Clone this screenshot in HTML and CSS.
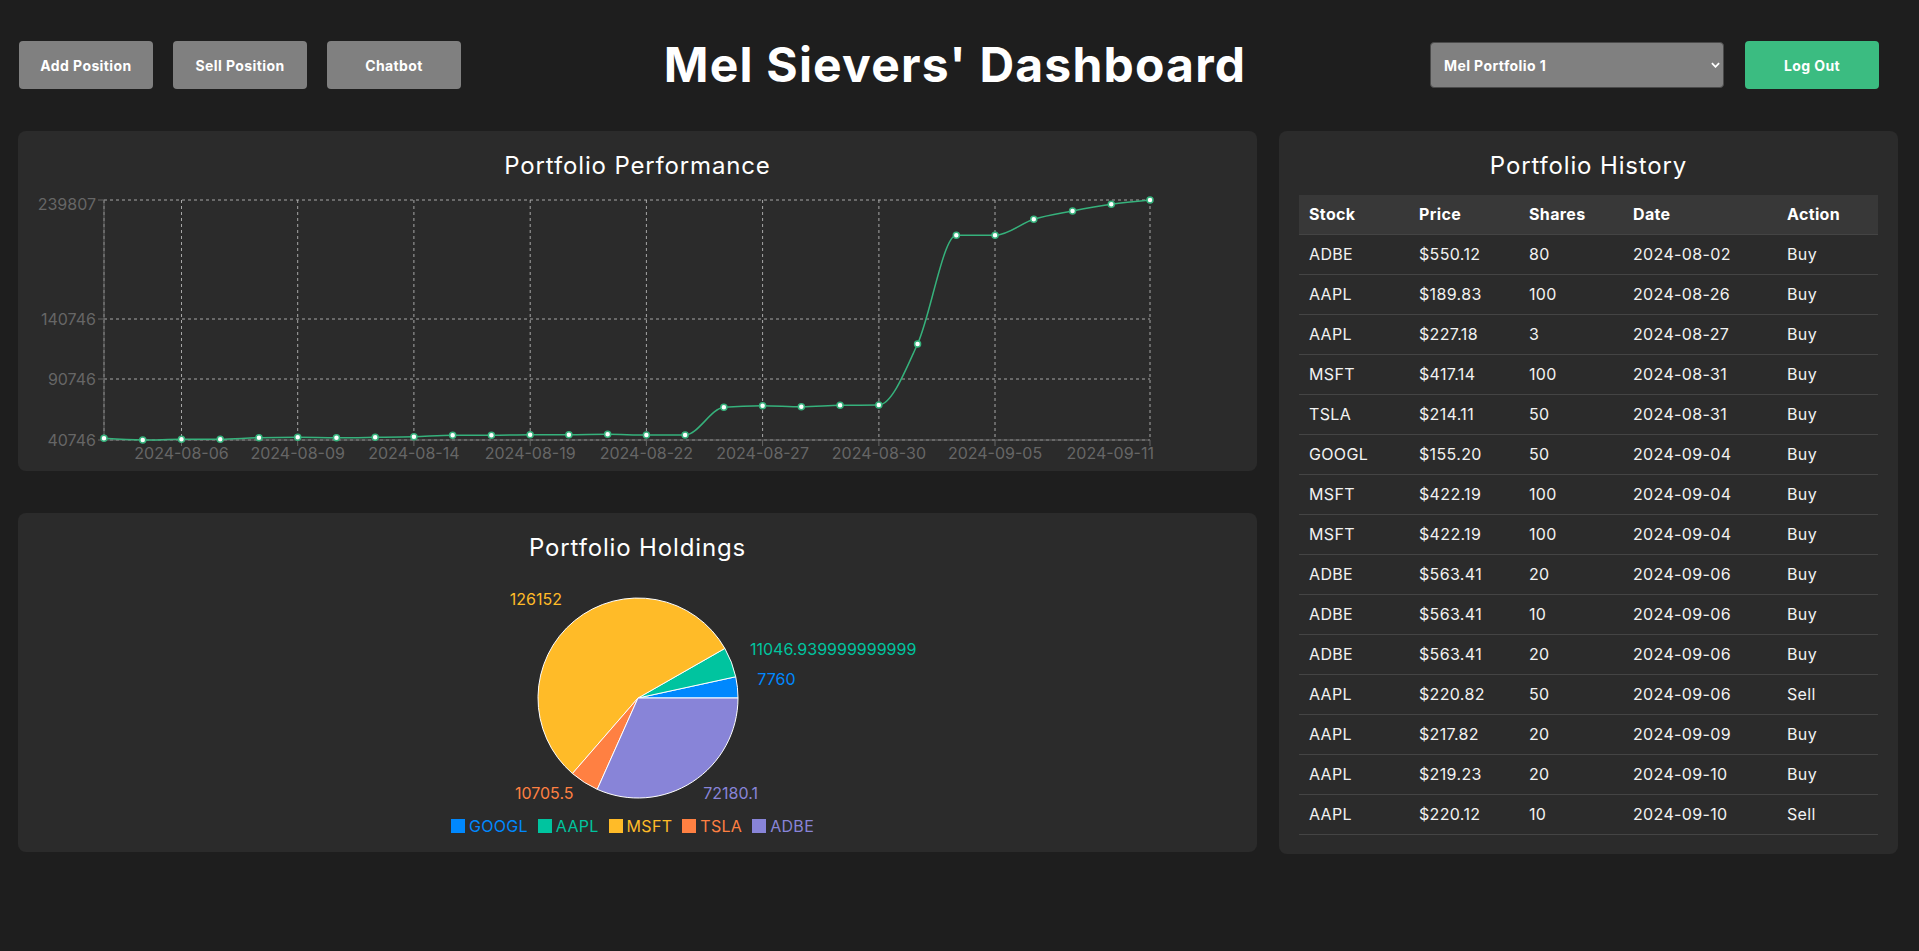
FILE: index.html
```html
<!DOCTYPE html>
<html lang="en">
<head>
<meta charset="utf-8">
<title>Mel Sievers' Dashboard</title>
<link rel="stylesheet" href="styles.css">
</head>
<body>
<header class="topbar">
  <div class="actions">
    <button class="btn btn-gray">Add Position</button>
    <button class="btn btn-gray">Sell Position</button>
    <button class="btn btn-gray">Chatbot</button>
  </div>
  <h1 class="page-title">Mel Sievers' Dashboard</h1>
  <div class="account">
    <div class="select-wrap">
      <select class="portfolio-select">
        <option>Mel Portfolio 1</option>
      </select>
      <svg class="chevron" viewBox="0 0 10 6" aria-hidden="true"><path d="M1 1 L5 5 L9 1" fill="none" stroke="#fff" stroke-width="2"/></svg>
    </div>
    <button class="btn btn-green">Log Out</button>
  </div>
</header>

<main class="dashboard">
  <div class="left-col">
    <section class="card perf-card">
      <h2 class="card-title">Portfolio Performance</h2>
      <svg class="line-chart" width="1199" height="280" viewBox="0 0 1199 280">
        <g class="grid">
          <line x1="66" y1="14" x2="1112" y2="14"/>
          <line x1="66" y1="133" x2="1112" y2="133"/>
          <line x1="66" y1="193" x2="1112" y2="193"/>
          <line x1="66" y1="254" x2="1112" y2="254"/>
          <line x1="66" y1="14" x2="66" y2="254"/>
          <line x1="143.5" y1="14" x2="143.5" y2="254"/>
          <line x1="259.7" y1="14" x2="259.7" y2="254"/>
          <line x1="375.9" y1="14" x2="375.9" y2="254"/>
          <line x1="492.2" y1="14" x2="492.2" y2="254"/>
          <line x1="608.4" y1="14" x2="608.4" y2="254"/>
          <line x1="724.6" y1="14" x2="724.6" y2="254"/>
          <line x1="840.9" y1="14" x2="840.9" y2="254"/>
          <line x1="957" y1="14" x2="957" y2="254"/>
          <line x1="1112" y1="14" x2="1112" y2="254"/>
        </g>
        <g class="axis">
          <line x1="66" y1="14" x2="66" y2="254"/>
          <line x1="66" y1="254" x2="1112" y2="254"/>
          <line x1="60" y1="14" x2="66" y2="14"/>
          <line x1="60" y1="133" x2="66" y2="133"/>
          <line x1="60" y1="193" x2="66" y2="193"/>
          <line x1="60" y1="254" x2="66" y2="254"/>
          <line x1="143.5" y1="254" x2="143.5" y2="260"/>
          <line x1="259.7" y1="254" x2="259.7" y2="260"/>
          <line x1="375.9" y1="254" x2="375.9" y2="260"/>
          <line x1="492.2" y1="254" x2="492.2" y2="260"/>
          <line x1="608.4" y1="254" x2="608.4" y2="260"/>
          <line x1="724.6" y1="254" x2="724.6" y2="260"/>
          <line x1="840.9" y1="254" x2="840.9" y2="260"/>
          <line x1="957" y1="254" x2="957" y2="260"/>
          <line x1="1112" y1="254" x2="1112" y2="260"/>
        </g>
        <g class="y-labels">
          <text x="58" y="24">239807</text>
          <text x="58" y="138.7">140746</text>
          <text x="58" y="198.7">90746</text>
          <text x="58" y="259.7">40746</text>
        </g>
        <g class="x-labels">
          <text x="143.5" y="273">2024-08-06</text>
          <text x="259.7" y="273">2024-08-09</text>
          <text x="375.9" y="273">2024-08-14</text>
          <text x="492.2" y="273">2024-08-19</text>
          <text x="608.4" y="273">2024-08-22</text>
          <text x="724.6" y="273">2024-08-27</text>
          <text x="840.9" y="273">2024-08-30</text>
          <text x="957" y="273">2024-09-05</text>
          <text class="x-last" x="1116" y="273">2024-09-11</text>
        </g>
        <path id="perf-line" class="perf-line" d=""/>
        <g id="perf-dots" class="perf-dots"></g>
      </svg>
    </section>

    <section class="card holdings-card">
      <h2 class="card-title">Portfolio Holdings</h2>
      <svg class="pie-chart" width="400" height="240" viewBox="0 0 400 240">
        <g class="slices">
          <path class="s-googl" d="M200,125 L300,125 A100,100 0 0 0 297.72,103.76 Z"/>
          <path class="s-aapl" d="M200,125 L297.72,103.76 A100,100 0 0 0 286.85,75.43 Z"/>
          <path class="s-msft" d="M200,125 L286.85,75.43 A100,100 0 1 0 134.45,200.52 Z"/>
          <path class="s-tsla" d="M200,125 L134.45,200.52 A100,100 0 0 0 159.26,216.33 Z"/>
          <path class="s-adbe" d="M200,125 L159.26,216.33 A100,100 0 0 0 300,125 Z"/>
        </g>
        <g class="pie-labels">
          <text class="t-googl" x="319.3" y="112.2">7760</text>
          <text class="t-aapl" x="312" y="82">11046.939999999999</text>
          <text class="t-msft end" x="123.9" y="32.3">126152</text>
          <text class="t-tsla end" x="135.5" y="226.2">10705.5</text>
          <text class="t-adbe" x="265.3" y="225.7">72180.1</text>
        </g>
      </svg>
      <ul class="legend">
        <li class="legend-item c-googl"><span class="swatch"></span>GOOGL</li>
        <li class="legend-item c-aapl"><span class="swatch"></span>AAPL</li>
        <li class="legend-item c-msft"><span class="swatch"></span>MSFT</li>
        <li class="legend-item c-tsla"><span class="swatch"></span>TSLA</li>
        <li class="legend-item c-adbe"><span class="swatch"></span>ADBE</li>
      </ul>
    </section>
  </div>

  <section class="card history-card">
    <h2 class="card-title history-title">Portfolio History</h2>
    <table class="history-table">
      <colgroup>
        <col class="col-stock"><col class="col-price"><col class="col-shares"><col class="col-date"><col class="col-action">
      </colgroup>
      <thead>
        <tr><th>Stock</th><th>Price</th><th>Shares</th><th>Date</th><th>Action</th></tr>
      </thead>
      <tbody>
        <tr><td>ADBE</td><td>$550.12</td><td>80</td><td>2024-08-02</td><td>Buy</td></tr>
        <tr><td>AAPL</td><td>$189.83</td><td>100</td><td>2024-08-26</td><td>Buy</td></tr>
        <tr><td>AAPL</td><td>$227.18</td><td>3</td><td>2024-08-27</td><td>Buy</td></tr>
        <tr><td>MSFT</td><td>$417.14</td><td>100</td><td>2024-08-31</td><td>Buy</td></tr>
        <tr><td>TSLA</td><td>$214.11</td><td>50</td><td>2024-08-31</td><td>Buy</td></tr>
        <tr><td>GOOGL</td><td>$155.20</td><td>50</td><td>2024-09-04</td><td>Buy</td></tr>
        <tr><td>MSFT</td><td>$422.19</td><td>100</td><td>2024-09-04</td><td>Buy</td></tr>
        <tr><td>MSFT</td><td>$422.19</td><td>100</td><td>2024-09-04</td><td>Buy</td></tr>
        <tr><td>ADBE</td><td>$563.41</td><td>20</td><td>2024-09-06</td><td>Buy</td></tr>
        <tr><td>ADBE</td><td>$563.41</td><td>10</td><td>2024-09-06</td><td>Buy</td></tr>
        <tr><td>ADBE</td><td>$563.41</td><td>20</td><td>2024-09-06</td><td>Buy</td></tr>
        <tr><td>AAPL</td><td>$220.82</td><td>50</td><td>2024-09-06</td><td>Sell</td></tr>
        <tr><td>AAPL</td><td>$217.82</td><td>20</td><td>2024-09-09</td><td>Buy</td></tr>
        <tr><td>AAPL</td><td>$219.23</td><td>20</td><td>2024-09-10</td><td>Buy</td></tr>
        <tr><td>AAPL</td><td>$220.12</td><td>10</td><td>2024-09-10</td><td>Sell</td></tr>
      </tbody>
    </table>
  </section>
</main>
<script src="script.js"></script>
</body>
</html>
```

FILE: styles.css
```css
* { box-sizing: border-box; }

html, body { margin: 0; padding: 0; }

body {
  background: #1e1e1e;
  color: #ffffff;
  font-family: Inter, "Noto Sans", "DejaVu Sans", sans-serif;
  min-height: 951px;
}

/* ---------- header ---------- */
.topbar {
  display: grid;
  grid-template-columns: 1fr auto 1fr;
  align-items: center;
  padding: 41px 28px 0 19px;
}

.actions {
  display: flex;
  gap: 20px;
}

.btn {
  height: 48px;
  border: none;
  border-radius: 4px;
  color: #ffffff;
  font-family: inherit;
  font-size: 14px;
  font-weight: 700;
  letter-spacing: 0.4px;
  padding: 0;
  cursor: pointer;
}

.btn-gray {
  width: 134px;
  background: #808080;
}

.btn-green {
  width: 134px;
  background: #3bbc81;
}

.page-title {
  margin: 0;
  font-size: 48px;
  font-weight: 700;
  line-height: 48px;
  letter-spacing: 1.2px;
  text-align: center;
  white-space: nowrap;
}

.account {
  justify-self: end;
  display: flex;
  align-items: center;
  gap: 21px;
  margin-right: 12px;
}

.select-wrap {
  position: relative;
}

.portfolio-select {
  appearance: none;
  -webkit-appearance: none;
  display: block;
  width: 294px;
  height: 46px;
  padding: 0 24px 0 13px;
  background: #808080;
  border: 1px solid #4a4a4a;
  border-radius: 4px;
  color: #ffffff;
  font-family: inherit;
  font-size: 14px;
  font-weight: 700;
  letter-spacing: 0.4px;
}

.chevron {
  position: absolute;
  right: 4px;
  top: 20px;
  width: 9px;
  height: 6px;
  pointer-events: none;
}

/* ---------- layout ---------- */
.dashboard {
  display: grid;
  grid-template-columns: 2fr 1fr;
  gap: 22px;
  align-items: start;
  padding: 42px 21px 0 18px;
}

.left-col {
  display: flex;
  flex-direction: column;
  gap: 42px;
}

.card {
  background: #2b2b2b;
  border-radius: 8px;
  padding: 20px;
}

.card-title {
  margin: 0;
  font-size: 24px;
  font-weight: 400;
  line-height: 30px;
  letter-spacing: 0.85px;
  text-align: center;
  color: #ffffff;
}

/* ---------- performance chart ---------- */
.perf-card {
  padding: 20px 20px 5px;
}

.line-chart {
  display: block;
  margin-top: 5px;
  overflow: visible;
}

.grid line {
  stroke: #bdbdbd;
  stroke-width: 1;
  stroke-dasharray: 3 3;
  opacity: 0.85;
}

.axis line {
  stroke: #666666;
  stroke-width: 1;
}

.y-labels text,
.x-labels text {
  fill: #666666;
  font-size: 16px;
  font-family: Inter, "Noto Sans", sans-serif;
}

.y-labels text { text-anchor: end; }
.x-labels text { text-anchor: middle; }
.x-labels text.x-last { text-anchor: end; }

.perf-line {
  fill: none;
  stroke: #36b27c;
  stroke-width: 1.5;
}

.perf-dots circle {
  fill: #ffffff;
  stroke: #36b27c;
  stroke-width: 1.5;
}

/* ---------- holdings ---------- */
.holdings-card {
  padding: 20px 20px 13px;
}

.pie-chart {
  display: block;
  margin: 10px auto 0;
  overflow: visible;
}

.slices path {
  stroke: #ffffff;
  stroke-width: 1;
}

.s-googl { fill: #0088fe; }
.s-aapl  { fill: #00c49f; }
.s-msft  { fill: #ffbb28; }
.s-tsla  { fill: #ff8042; }
.s-adbe  { fill: #8884d8; }

.pie-labels text {
  font-size: 16px;
  font-family: Inter, "Noto Sans", sans-serif;
}

.pie-labels text.end { text-anchor: end; }

.t-googl { fill: #0088fe; }
.t-aapl  { fill: #00c49f; }
.t-msft  { fill: #ffbb28; }
.t-tsla  { fill: #ff8042; }
.t-adbe  { fill: #8884d8; }

.legend {
  list-style: none;
  margin: 0;
  padding: 0;
  height: 26px;
  display: flex;
  justify-content: center;
  align-items: center;
  font-size: 16px;
  letter-spacing: 0.3px;
}

.legend-item {
  display: flex;
  align-items: center;
  margin-right: 10px;
}

.swatch {
  width: 14px;
  height: 14px;
  margin-right: 4px;
  background: currentColor;
}

.c-googl { color: #0088fe; }
.c-aapl  { color: #00c49f; }
.c-msft  { color: #ffbb28; }
.c-tsla  { color: #ff8042; }
.c-adbe  { color: #8884d8; }

/* ---------- history table ---------- */
.history-card {
  padding: 20px 20px 19px;
}

.history-title {
  margin-bottom: 14px;
}

.history-table {
  width: 100%;
  border-collapse: collapse;
  table-layout: fixed;
  font-size: 16px;
  letter-spacing: 0.35px;
  color: #f2f2f2;
}

.col-stock  { width: 110px; }
.col-price  { width: 110px; }
.col-shares { width: 104px; }
.col-date   { width: 154px; }
.col-action { width: auto; }

.history-table th,
.history-table td {
  text-align: left;
  padding: 10px;
  line-height: 19px;
  border-bottom: 1px solid #444444;
  white-space: nowrap;
}

.history-table th {
  background: #383838;
  font-weight: 700;
  color: #ffffff;
}
```

FILE: script.js
```js
(function () {
  var values = [42156, 40746, 41327, 41327, 42654, 42985, 42654, 42985, 43483, 44644,
    44644, 45142, 45142, 45474, 44893, 44893, 67868, 69195, 68366, 69527,
    69776, 120370, 210528, 210528, 223799, 230683, 236240, 239807];
  var x0 = 66, dx = 38.741, yTop = 14, yBot = 254, vMin = 40746, vMax = 239807;
  var NS = "http://www.w3.org/2000/svg";

  var pts = values.map(function (v, i) {
    return [x0 + i * dx, yBot - (v - vMin) / (vMax - vMin) * (yBot - yTop)];
  });

  function sign(a) { return a < 0 ? -1 : 1; }
  var n = pts.length, t = new Array(n);
  for (var i = 1; i < n - 1; i++) {
    var h0 = pts[i][0] - pts[i - 1][0], h1 = pts[i + 1][0] - pts[i][0];
    var s0 = (pts[i][1] - pts[i - 1][1]) / h0, s1 = (pts[i + 1][1] - pts[i][1]) / h1;
    var p = (s0 * h1 + s1 * h0) / (h0 + h1);
    t[i] = (sign(s0) + sign(s1)) * Math.min(Math.abs(s0), Math.abs(s1), 0.5 * Math.abs(p)) || 0;
  }
  var hs = pts[1][0] - pts[0][0];
  t[0] = (3 * (pts[1][1] - pts[0][1]) / hs - t[1]) / 2;
  var he = pts[n - 1][0] - pts[n - 2][0];
  t[n - 1] = (3 * (pts[n - 1][1] - pts[n - 2][1]) / he - t[n - 2]) / 2;

  var d = "M" + pts[0][0].toFixed(2) + "," + pts[0][1].toFixed(2);
  for (var j = 0; j < n - 1; j++) {
    var a = pts[j], b = pts[j + 1], k = (b[0] - a[0]) / 3;
    d += "C" + (a[0] + k).toFixed(2) + "," + (a[1] + k * t[j]).toFixed(2) + " " +
      (b[0] - k).toFixed(2) + "," + (b[1] - k * t[j + 1]).toFixed(2) + " " +
      b[0].toFixed(2) + "," + b[1].toFixed(2);
  }
  document.getElementById("perf-line").setAttribute("d", d);

  var g = document.getElementById("perf-dots");
  pts.forEach(function (pt) {
    var c = document.createElementNS(NS, "circle");
    c.setAttribute("cx", pt[0].toFixed(2));
    c.setAttribute("cy", pt[1].toFixed(2));
    c.setAttribute("r", "3");
    g.appendChild(c);
  });
})();
```
